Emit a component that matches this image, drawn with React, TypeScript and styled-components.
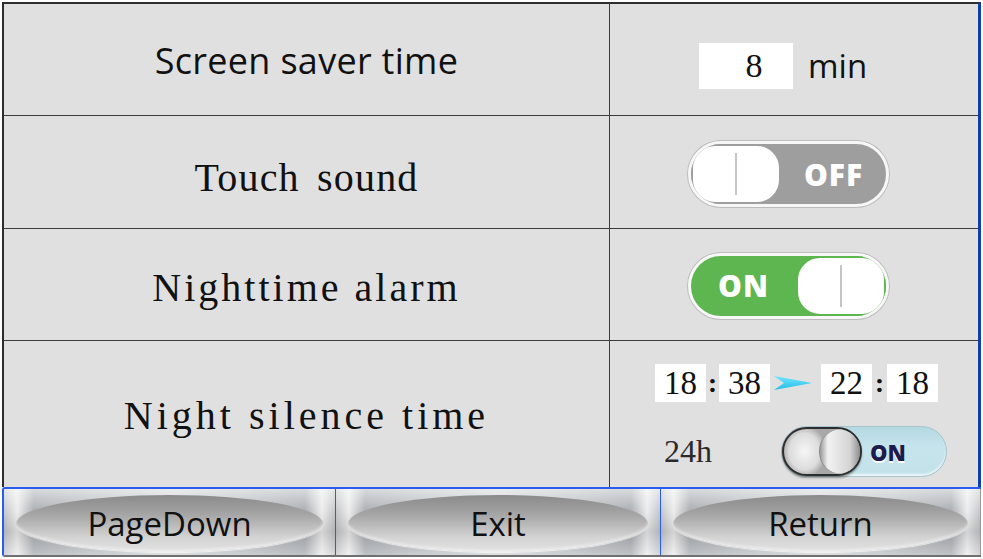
import React from "react";
import styled, { createGlobalStyle } from "styled-components";

const GlobalStyle = createGlobalStyle`
  *, *::before, *::after { box-sizing: border-box; }
  html, body { margin: 0; padding: 0; background: #ffffff; }
  body { font-family: "Open Sans", "Liberation Sans", sans-serif; }
`;

const Screen = styled.div`
  width: 979px;
  margin: 2px 0 0 2px;
  display: flex;
  flex-direction: column;
`;

const Table = styled.div`
  border-top: 2px solid #2e2e2e;
  border-left: 2px solid #2e2e2e;
  border-right: 3px solid #0c3fae;
  background: #e0e0e0;
`;

const Row = styled.div<{ $height: number; $last?: boolean }>`
  display: grid;
  grid-template-columns: 606px 1fr;
  height: ${(p) => p.$height}px;
  border-bottom: ${(p) => (p.$last ? "none" : "1px solid #3c3c3c")};
`;

const Label = styled.div<{ $serif?: boolean; $spacing?: number; $words?: number; $top?: number }>`
  display: flex;
  align-items: center;
  justify-content: center;
  border-right: 1px solid #3c3c3c;
  padding-top: ${(p) => p.$top ?? 0}px;
  font-family: ${(p) =>
    p.$serif ? '"Liberation Serif", "Times New Roman", serif' : '"Open Sans", "Liberation Sans", sans-serif'};
  font-size: ${(p) => (p.$serif ? 40 : 36)}px;
  letter-spacing: ${(p) => p.$spacing ?? 0}px;
  word-spacing: ${(p) => p.$words ?? 0}px;
  color: #111111;
  white-space: pre;
`;

const Value = styled.div<{ $pad: number; $top?: number }>`
  display: flex;
  align-items: center;
  padding-left: ${(p) => p.$pad}px;
  padding-top: ${(p) => p.$top ?? 0}px;
`;

const NumberBox = styled.div`
  width: 94px;
  height: 46px;
  background: #ffffff;
  display: flex;
  align-items: center;
  justify-content: center;
  padding-left: 16px;
  font-family: "Liberation Serif", serif;
  font-size: 34px;
  color: #111111;
`;

const Unit = styled.span`
  margin-left: 15px;
  font-size: 33px;
  color: #111111;
  line-height: 1;
`;

const Switch = styled.div<{ $on: boolean }>`
  width: 201px;
  height: 66px;
  border-radius: 33px;
  border: 3px solid #f7f7f7;
  box-shadow: 0 0 0 1px #bcbcbc;
  background: ${(p) => (p.$on ? "#5db64f" : "#9e9e9e")};
  display: flex;
  flex-direction: ${(p) => (p.$on ? "row-reverse" : "row")};
  align-items: center;
  overflow: hidden;
`;

const Knob = styled.div<{ $on: boolean }>`
  position: relative;
  flex-shrink: 0;
  width: 90px;
  height: 60px;
  border-radius: 24px;
  background: #ffffff;
  border: 2px solid ${(p) => (p.$on ? "#5db64f" : "#9e9e9e")};

  &::after {
    content: "";
    position: absolute;
    left: 50%;
    top: 7px;
    bottom: 7px;
    width: 2px;
    margin-left: -1px;
    background: #c4c4c4;
  }
`;

const SwitchText = styled.span`
  flex: 1;
  text-align: center;
  color: #ffffff;
  font-weight: 800;
  font-size: 30px;
  letter-spacing: 1px;
`;

const NightCell = styled.div`
  display: flex;
  flex-direction: column;
  padding: 23px 0 0 45px;
  gap: 24px;
`;

const TimeLine = styled.div`
  display: flex;
  align-items: center;
  height: 38px;
`;

const TimeBox = styled.div`
  width: 51px;
  height: 38px;
  background: #ffffff;
  display: flex;
  align-items: center;
  justify-content: center;
  font-family: "Liberation Serif", serif;
  font-size: 33px;
  color: #111111;
`;

const Colon = styled.span<{ $w: number }>`
  width: ${(p) => p.$w}px;
  text-align: center;
  font-weight: 800;
  font-size: 22px;
  color: #111111;
  line-height: 1;
`;

const Arrow = styled.svg`
  margin: 0 9px 0 4px;
`;

const ModeLine = styled.div`
  display: flex;
  align-items: center;
  height: 51px;
`;

const ModeLabel = styled.span`
  margin-left: 9px;
  width: 117px;
  font-family: "Liberation Serif", serif;
  font-size: 32px;
  color: #2a2a2a;
`;

const RoundSwitch = styled.div`
  width: 166px;
  height: 51px;
  border-radius: 26px;
  background: linear-gradient(180deg, #b4d8e2, #c6e4ec 40%, #c2e2ea);
  border: 1px solid #a8c4cc;
  box-shadow: inset 0 -2px 2px rgba(255, 255, 255, 0.7);
  display: flex;
  align-items: center;
`;

const RoundKnob = styled.div`
  position: relative;
  flex-shrink: 0;
  width: 80px;
  height: 49px;
  border-radius: 25px;
  border: 2px solid #2e2e2e;
  background:
    radial-gradient(ellipse 22px 26px at 27% 50%, #f6f6f6 0%, #dcdcdc 70%, #a8a8a8 100%),
    #bdbdbd;
  box-shadow: 0 2px 2px rgba(0, 0, 0, 0.35);
  overflow: hidden;

  &::after {
    content: "";
    position: absolute;
    top: 0;
    bottom: 0;
    left: 46%;
    right: 0;
    border-left: 1px solid #8a8a8a;
    border-radius: 22px 0 0 22px;
    background: linear-gradient(90deg, #9a9a9a 0%, #f2f2f2 20%, #d4d4d4 75%, #8e8e8e 100%);
  }
`;

const RoundText = styled.span`
  flex: 1;
  text-align: center;
  padding-right: 32px;
  font-weight: 800;
  font-size: 22px;
  color: #1b1b4d;
  text-shadow: 0 2px 0 #ffffff;
`;

const ButtonBar = styled.div`
  display: grid;
  grid-template-columns: 332px 325px 1fr;
  height: 70px;
  border-top: 2px solid #2a5cf0;
  border-left: 2px solid #2a5cf0;
  border-bottom: 2px solid #707070;
  border-radius: 3px 0 0 3px;
  background: #c8c8c8;
`;

const Button = styled.div<{ $last?: boolean }>`
  display: flex;
  align-items: center;
  justify-content: center;
  padding: 6px 12px 3px;
  border-right: ${(p) => (p.$last ? "1px solid #9a9a9a" : "1px solid #2a5cf0")};
  background:
    linear-gradient(180deg, rgba(255, 255, 255, 0.55), rgba(255, 255, 255, 0) 35%, rgba(0, 0, 0, 0.1) 65%, rgba(255, 255, 255, 0.25)),
    linear-gradient(90deg, #c4c7ca, #ececec 4%, #a9adb2 9%, #d2d4d6 50%, #a9adb2 91%, #ececec 96%, #c4c7ca);
`;

const Pill = styled.div`
  width: 100%;
  height: 57px;
  border-radius: 50%;
  display: flex;
  align-items: center;
  justify-content: center;
  background: linear-gradient(180deg, #8a8a8a 0%, #a6a6a6 35%, #d4d4d4 75%, #e2e2e2 100%);
  box-shadow: 0 1px 1px rgba(255, 255, 255, 0.7), inset 0 -2px 3px rgba(255, 255, 255, 0.45);
  font-size: 33px;
  color: #111111;
`;

function Toggle({ on }: { on: boolean }) {
  return (
    <Switch $on={on}>
      <Knob $on={on} />
      <SwitchText>{on ? "ON" : "OFF"}</SwitchText>
    </Switch>
  );
}

export default function App() {
  return (
    <>
      <GlobalStyle />
      <Screen>
        <Table>
          <Row $height={112}>
            <Label $top={2} $spacing={0.3}>
              Screen saver time
            </Label>
            <Value $pad={89} $top={12}>
              <NumberBox>8</NumberBox>
              <Unit>min</Unit>
            </Value>
          </Row>
          <Row $height={113}>
            <Label $serif $spacing={1.2} $words={6} $top={10}>
              Touch sound
            </Label>
            <Value $pad={78} $top={4}>
              <Toggle on={false} />
            </Value>
          </Row>
          <Row $height={112}>
            <Label $serif $spacing={3} $top={6}>
              Nighttime alarm
            </Label>
            <Value $pad={78} $top={2}>
              <Toggle on />
            </Value>
          </Row>
          <Row $height={146} $last>
            <Label $serif $spacing={4} $top={2}>
              Night silence time
            </Label>
            <NightCell>
              <TimeLine>
                <TimeBox>18</TimeBox>
                <Colon $w={13}>:</Colon>
                <TimeBox>38</TimeBox>
                <Arrow width="38" height="16" viewBox="0 0 38 16">
                  <defs>
                    <linearGradient id="arrowFill" x1="0" y1="0" x2="0" y2="1">
                      <stop offset="0" stopColor="#6fe6ff" />
                      <stop offset="1" stopColor="#22bfe6" />
                    </linearGradient>
                  </defs>
                  <polygon points="0,1 38,8 0,15 10,8" fill="url(#arrowFill)" />
                </Arrow>
                <TimeBox>22</TimeBox>
                <Colon $w={15}>:</Colon>
                <TimeBox>18</TimeBox>
              </TimeLine>
              <ModeLine>
                <ModeLabel>24h</ModeLabel>
                <RoundSwitch>
                  <RoundKnob />
                  <RoundText>ON</RoundText>
                </RoundSwitch>
              </ModeLine>
            </NightCell>
          </Row>
        </Table>
        <ButtonBar>
          <Button>
            <Pill>PageDown</Pill>
          </Button>
          <Button>
            <Pill>Exit</Pill>
          </Button>
          <Button $last>
            <Pill>Return</Pill>
          </Button>
        </ButtonBar>
      </Screen>
    </>
  );
}
